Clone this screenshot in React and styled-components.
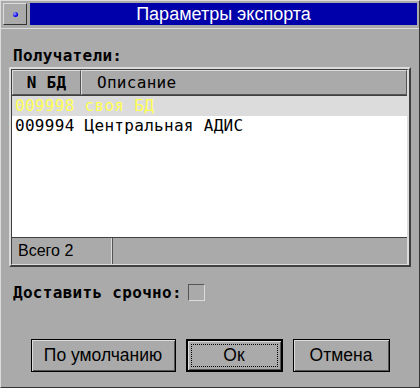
import React from 'react'
import styled, { createGlobalStyle } from 'styled-components'

const GlobalStyle = createGlobalStyle`
  body {
    margin: 0;
    background: #aaaaaa;
  }
`

const LIGHT = '#dcdcdc'
const DARK = '#555555'
const MONO = '"DejaVu Sans Mono", monospace'
const SANS = '"Liberation Sans", Arial, sans-serif'

const Window = styled.div`
  box-sizing: border-box;
  width: 420px;
  height: 388px;
  background: #aaaaaa;
  border: 1px solid;
  border-color: ${LIGHT} #333333 #333333 ${LIGHT};
  display: flex;
  flex-direction: column;
`

const TitleRow = styled.div`
  display: flex;
  gap: 3px;
  padding: 2px 2px 0 2px;
  height: 22px;
`

const SysButton = styled.div`
  box-sizing: border-box;
  width: 24px;
  height: 22px;
  border: 1px solid;
  border-color: ${LIGHT} #333 #333 ${LIGHT};
  display: flex;
  align-items: center;
  justify-content: center;

  span {
    width: 5px;
    height: 5px;
    border-radius: 50%;
    background: radial-gradient(circle at 35% 35%, #aaf 0, #0000ee 60%);
  }
`

const TitleBar = styled.div`
  flex: 1;
  background: #0000aa;
  color: #fff;
  font-family: ${SANS};
  font-size: 18px;
  display: flex;
  align-items: center;
  justify-content: center;
`

const TitleRule = styled.div`
  height: 1px;
  margin-top: 3px;
  background: ${LIGHT};
`

const Body = styled.div`
  display: flex;
  flex-direction: column;
  padding: 0 8px;
`

const Label = styled.div`
  font-family: ${MONO};
  font-size: 16px;
  letter-spacing: 0.3px;
  font-weight: ${p => (p.$bold ? 'bold' : 'normal')};
  color: #000;
  line-height: 19px;
`

const RecipientsLabel = styled(Label)`
  margin: 17px 0 0 4px;
`

const Frame = styled.div`
  box-sizing: border-box;
  margin-top: 2px;
  height: 200px;
  border: 2px solid;
  border-color: ${LIGHT} #404040 #404040 ${LIGHT};
  display: flex;
`

const ListBox = styled.div`
  flex: 1;
  display: flex;
  flex-direction: column;
  border-style: solid;
  border-width: 1px 2px 1px 1px;
  border-color: #404040 ${LIGHT} ${LIGHT} #404040;
`

const Header = styled.div`
  display: flex;
  height: 25px;
  border-bottom: 1px solid #404040;
`

const HeaderCell = styled.div`
  box-sizing: border-box;
  width: ${p => p.$width || 'auto'};
  flex: ${p => (p.$grow ? 1 : 'none')};
  border: 1px solid;
  border-color: ${LIGHT} ${DARK} ${DARK} ${LIGHT};
  display: flex;
  align-items: center;
  justify-content: ${p => (p.$center ? 'center' : 'flex-start')};
  padding-left: ${p => (p.$center ? 0 : '15px')};
  font-family: ${MONO};
  font-size: 16px;
  letter-spacing: 0.3px;
  font-weight: ${p => (p.$bold ? 'bold' : 'normal')};
`

const Rows = styled.div`
  flex: 1;
  background: #fff;
`

const Row = styled.div`
  height: 20px;
  line-height: 20px;
  padding-left: 3px;
  font-family: ${MONO};
  font-size: 16px;
  letter-spacing: 0.3px;
  white-space: pre;
  background: ${p => (p.$selected ? LIGHT : 'transparent')};
  color: ${p => (p.$selected ? '#ffff55' : '#000')};
`

const StatusBar = styled.div`
  display: flex;
  height: 26px;
  border-top: 1px solid #404040;
`

const StatusCell = styled.div`
  box-sizing: border-box;
  width: ${p => p.$width || 'auto'};
  flex: ${p => (p.$grow ? 1 : 'none')};
  border-right: 1px solid ${p => (p.$grow ? 'transparent' : DARK)};
  box-shadow: inset -1px 0 0 ${p => (p.$grow ? 'transparent' : LIGHT)};
  display: flex;
  align-items: center;
  padding-left: 6px;
  font-family: ${SANS};
  font-size: 16px;
`

const CheckRow = styled.div`
  display: flex;
  align-items: center;
  gap: 6px;
  margin: 16px 0 0 4px;
`

const CheckBox = styled.div`
  box-sizing: border-box;
  width: 17px;
  height: 17px;
  border: 1px solid;
  border-color: ${DARK} ${LIGHT} ${LIGHT} ${DARK};
  background: #aaaaaa;
`

const ButtonRow = styled.div`
  display: flex;
  justify-content: center;
  gap: 10px;
  margin-top: 37px;
`

const Button = styled.div`
  box-sizing: border-box;
  width: ${p => p.$width};
  height: 33px;
  border: ${p => (p.$default ? 2 : 1)}px solid #000;
  box-shadow: inset 1px 1px 0 ${LIGHT}, inset -1px -1px 0 ${DARK};
  display: flex;
  align-items: center;
  justify-content: center;
  font-family: ${SANS};
  font-size: 17.5px;
  color: #000;
  padding: 3px;

  span {
    flex: 1;
    align-self: stretch;
    display: flex;
    align-items: center;
    justify-content: center;
    border: 1px dotted ${p => (p.$default ? '#000' : 'transparent')};
  }
`

const recipients = [
  { id: '009998', name: 'своя БД', selected: true },
  { id: '009994', name: 'Центральная АДИС' },
]

export default function App() {
  return (
    <>
      <GlobalStyle />
      <Window>
        <TitleRow>
          <SysButton>
            <span />
          </SysButton>
          <TitleBar>Параметры экспорта</TitleBar>
        </TitleRow>
        <TitleRule />
        <Body>
          <RecipientsLabel $bold>Получатели:</RecipientsLabel>
          <Frame>
            <ListBox>
              <Header>
                <HeaderCell $width="69px" $center $bold>N БД</HeaderCell>
                <HeaderCell $grow>Описание</HeaderCell>
              </Header>
              <Rows>
                {recipients.map(r => (
                  <Row key={r.id} $selected={r.selected}>
                    {r.id} {r.name}
                  </Row>
                ))}
              </Rows>
              <StatusBar>
                <StatusCell $width="101px">Всего 2</StatusCell>
                <StatusCell $grow />
              </StatusBar>
            </ListBox>
          </Frame>
          <CheckRow>
            <Label $bold>Доставить срочно:</Label>
            <CheckBox />
          </CheckRow>
          <ButtonRow>
            <Button $width="145px"><span>По умолчанию</span></Button>
            <Button $width="97px" $default><span>Ок</span></Button>
            <Button $width="97px"><span>Отмена</span></Button>
          </ButtonRow>
        </Body>
      </Window>
    </>
  )
}
